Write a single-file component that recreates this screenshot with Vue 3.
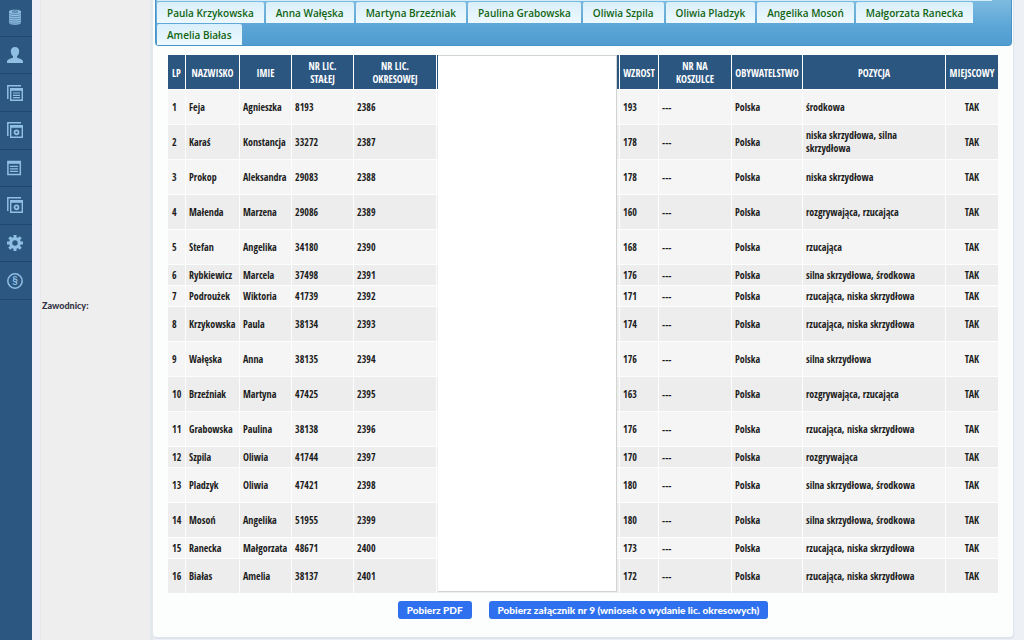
<script setup>
const menu = [
  { icon: 'coins', label: 'Finanse' },
  { icon: 'user', label: 'Konto' },
  { icon: 'docs', label: 'Dokumenty' },
  { icon: 'shots', label: 'Galerie' },
  { icon: 'doc', label: 'Formularz' },
  { icon: 'shots', label: 'Archiwum' },
  { icon: 'gear', label: 'Ustawienia' },
  { icon: 'law', label: 'Przepisy' }
]

const tabRows = [
  ['Paula Krzykowska', 'Anna Wałęska', 'Martyna Brzeźniak', 'Paulina Grabowska', 'Oliwia Szpila', 'Oliwia Pladzyk', 'Angelika Mosoń', 'Małgorzata Ranecka'],
  ['Amelia Białas']
]

const players = [
  ['Feja', 'Agnieszka', '8193', '2386', '193', 'środkowa'],
  ['Karaś', 'Konstancja', '33272', '2387', '178', 'niska skrzydłowa, silna skrzydłowa'],
  ['Prokop', 'Aleksandra', '29083', '2388', '178', 'niska skrzydłowa'],
  ['Małenda', 'Marzena', '29086', '2389', '160', 'rozgrywająca, rzucająca'],
  ['Stefan', 'Angelika', '34180', '2390', '168', 'rzucająca'],
  ['Rybkiewicz', 'Marcela', '37498', '2391', '176', 'silna skrzydłowa, środkowa', true],
  ['Podroużek', 'Wiktoria', '41739', '2392', '171', 'rzucająca, niska skrzydłowa', true],
  ['Krzykowska', 'Paula', '38134', '2393', '174', 'rzucająca, niska skrzydłowa'],
  ['Wałęska', 'Anna', '38135', '2394', '176', 'silna skrzydłowa'],
  ['Brzeźniak', 'Martyna', '47425', '2395', '163', 'rozgrywająca, rzucająca'],
  ['Grabowska', 'Paulina', '38138', '2396', '176', 'rzucająca, niska skrzydłowa'],
  ['Szpila', 'Oliwia', '41744', '2397', '170', 'rozgrywająca', true],
  ['Pladzyk', 'Oliwia', '47421', '2398', '180', 'silna skrzydłowa, środkowa'],
  ['Mosoń', 'Angelika', '51955', '2399', '180', 'silna skrzydłowa, środkowa'],
  ['Ranecka', 'Małgorzata', '48671', '2400', '173', 'rzucająca, niska skrzydłowa', true],
  ['Białas', 'Amelia', '38137', '2401', '172', 'rzucająca, niska skrzydłowa']
]
</script>

<template>
  <div class="page">
    <nav class="side">
      <ul>
        <li v-for="(m, i) in menu" :key="i">
          <a href="#" :aria-label="m.label">
            <svg viewBox="0 0 16 16" width="16" height="16" fill="none" stroke="#8fbfe3" aria-hidden="true">
              <g v-if="m.icon === 'coins'">
                <path d="M2 2.500C2 0 14 0 14 2.500v11c0 3-12 3-12 0z" fill="#8fbfe3" stroke="none" />
                <path d="M2 4.200c1 1.600 11 1.600 12 0M2 6.400c1 1.600 11 1.600 12 0M2 8.600c1 1.600 11 1.600 12 0M2 10.800c1 1.600 11 1.600 12 0M2 13c1 1.600 11 1.600 12 0" stroke="#2c5780" stroke-width=".5" />
                <ellipse cx="8" cy="2.600" rx="3" ry=".8" stroke="#2c5780" stroke-width=".7" />
              </g>
              <path v-else-if="m.icon === 'user'" d="M8 0c2.700 0 4.200 1.900 4.200 4.300 0 2.200-.9 4-2.200 5v1.400c2.900.8 6 1.700 6 4.100V16H0v-1.200c0-2.400 3.100-3.300 6-4.100V9.300c-1.300-1-2.200-2.800-2.200-5C3.800 1.900 5.300 0 8 0z" fill="#8fbfe3" stroke="none" />
              <g v-else-if="m.icon === 'docs'">
                <path d="M.8 14V.8H14" stroke-width="1.500" />
                <path d="M3.700 3.700h11.600v11.600H3.700z" stroke-width="1.400" />
                <path d="M3.500 4.500h12" stroke-width="2.600" />
                <path d="M6 8h7M6 10.300h7M6 12.600h7" stroke-width="1.200" />
              </g>
              <g v-else-if="m.icon === 'shots'">
                <path d="M.8 14V.8H14" stroke-width="1.500" />
                <path d="M3.700 3.700h11.600v11.600H3.700z" stroke-width="1.400" />
                <path d="M3.500 4.500h12" stroke-width="2.600" />
                <circle cx="9.500" cy="10.300" r="2" stroke-width="1.800" />
              </g>
              <g v-else-if="m.icon === 'doc'">
                <path d="M.9 1.500h12.400v13H.9z" stroke-width="1.500" />
                <path d="M.5 2.400h13.200" stroke-width="2.800" />
                <path d="M3 6.300h8M3 8.800h8M3 11.300h8" stroke-width="1.300" />
              </g>
              <g v-else-if="m.icon === 'gear'">
                <circle cx="8" cy="8" r="4.300" stroke-width="3.200" />
                <path d="M8 0v3M8 13v3M0 8h3M13 8h3M2.300 2.300l2.100 2.100M11.600 11.600l2.100 2.100M2.300 13.700l2.100-2.100M11.600 4.400l2.100-2.100" stroke-width="3" />
              </g>
              <g v-else>
                <circle cx="8" cy="8" r="7.200" stroke-width="1.500" />
                <text x="8" y="11.300" class="law">§</text>
              </g>
            </svg>
          </a>
        </li>
      </ul>
    </nav>

    <main class="main">
      <div class="label">Zawodnicy:</div>
      <section class="card">
        <div class="tabs">
          <div class="sliver"></div>
          <div v-for="(r, i) in tabRows" :key="i" class="tabrow">
            <a v-for="t in r" :key="t" href="#">{{ t }}</a>
          </div>
        </div>

        <div class="tablebox">
          <table>
            <colgroup>
              <col class="w18"><col class="w54"><col class="w52"><col class="w62"><col class="w83"><col class="w183">
              <col class="w39"><col class="w73"><col class="w71"><col class="w143"><col class="w52">
            </colgroup>
            <thead>
              <tr>
                <th>LP</th><th>NAZWISKO</th><th>IMIE</th><th>NR LIC.<br>STAŁEJ</th><th>NR LIC.<br>OKRESOWEJ</th><th></th>
                <th>WZROST</th><th>NR NA<br>KOSZULCE</th><th>OBYWATELSTWO</th><th>POZYCJA</th><th>MIEJSCOWY</th>
              </tr>
            </thead>
            <tbody>
              <tr v-for="(p, i) in players" :key="i" :class="{ short: p[6] }">
                <td>{{ i + 1 }}</td><td>{{ p[0] }}</td><td>{{ p[1] }}</td><td>{{ p[2] }}</td><td>{{ p[3] }}</td><td></td>
                <td>{{ p[4] }}</td><td>---</td><td>Polska</td><td class="pos">{{ p[5] }}</td><td class="mid">TAK</td>
              </tr>
            </tbody>
          </table>
          <div class="cover"></div>
        </div>

        <div class="actions">
          <button type="button">Pobierz PDF</button>
          <button type="button">Pobierz załącznik nr 9 (wniosek o wydanie lic. okresowych)</button>
        </div>
      </section>
    </main>
  </div>
</template>

<style>
body { background: #edf0f6; overflow: hidden; }
</style>

<style scoped>
* { box-sizing: border-box; }
.page { display: flex; min-height: 100vh; }
.side { width: 32px; flex: none; background: #2c5780; overflow: hidden; }
.side ul { list-style: none; margin: -1px 0 0; padding: 0; height: 301px; display: flex; flex-direction: column; }
.side li { flex: 1; border-bottom: 1px solid #1f466d; }
.side a { display: flex; height: 100%; align-items: center; padding-left: 7px; }
.law { font: bold 10px "Liberation Sans", sans-serif; fill: #8fbfe3; stroke: none; text-anchor: middle; }
.main { flex: 1; min-width: 0; display: flex; padding: 0 10px 3px 8px; background: linear-gradient(90deg, #efeff8 8px, #edf0f5 8px); }
.label { width: 113px; flex: none; display: flex; align-items: center; padding: 0 0 30px 1px; margin-bottom: -3px; background: #eeeeee; border-left: 1px solid #e6e8ea; border-right: 3px solid #e3e8ea; font: 900 9px Lato, sans-serif; color: #333344; }
.card { flex: 1; min-width: 0; background: #fcfefe; border-right: 1px solid #dfe5ec; border-radius: 0 0 4px 4px; box-shadow: 0 2px 1px #dfe3ed; }
.tabs { margin: 0 1px 0 2px; height: 46px; padding-left: 1px; background: linear-gradient(#7dbbe0, #5ba5d6 60%, #519dd0); border: solid #4793c7; border-width: 0 1px 1px; border-radius: 0 0 4px 4px; }
.sliver { width: 835px; max-width: 100%; height: 1px; background: #d3ecf8; margin-bottom: 1px; }
.tabrow { display: flex; gap: 2px; height: 22px; padding-bottom: 1px; }
.tabrow:last-child { height: 21px; padding: 0; }
.tabrow a { display: flex; align-items: center; padding: 0 10px; background: linear-gradient(#d9effb, #eef9fe); color: #126512; border-radius: 2px 2px 0 0; font: 600 10px "Open Sans", sans-serif; text-decoration: none; white-space: nowrap; }
.tablebox { position: relative; margin: 9px 15px 0; }
table { width: 100%; table-layout: fixed; border-spacing: 0; font: bold 10px/13px "Open Sans Condensed", "Liberation Sans Narrow", "Open Sans", sans-serif; color: #1c1c1c; }
.w18 { width: 18px; } .w54 { width: 54px; } .w52 { width: 52px; } .w62 { width: 62px; } .w83 { width: 83px; } .w183 { width: 183px; }
.w39 { width: 39px; } .w73 { width: 73px; } .w71 { width: 71px; } .w143 { width: 143px; }
th, td { border-right: 1px solid #fcfefe; border-bottom: 1px solid #fcfefe; white-space: nowrap; }
th { height: 35px; padding: 2px 0 0; background: #2b567f; color: #fff; text-align: center; }
th:last-child, td:last-child { border-right: 0; }
td { height: 35px; padding: 0 0 0 3px; background: #f5f5f5; text-align: left; }
td:first-child { padding-left: 4px; }
tr:nth-child(even) td { background: #ededed; }
.short td { height: 21px; }
.pos { white-space: normal; padding-right: 30px; }
.short .pos { white-space: nowrap; }
.mid { text-align: center; padding: 0; }
.cover { position: absolute; top: 0; bottom: 2px; left: 270px; right: 381px; background: #fff; border: solid #d2d4d2; border-width: 1px 1px 1px 0; }
.actions { display: flex; justify-content: center; gap: 17px; padding: 7px 0 18px; }
button { height: 18px; padding: 0 9px; border: 0; border-radius: 3px; background: #2f70ef; color: #fff; font: 900 10px Lato, sans-serif; white-space: nowrap; }
</style>
